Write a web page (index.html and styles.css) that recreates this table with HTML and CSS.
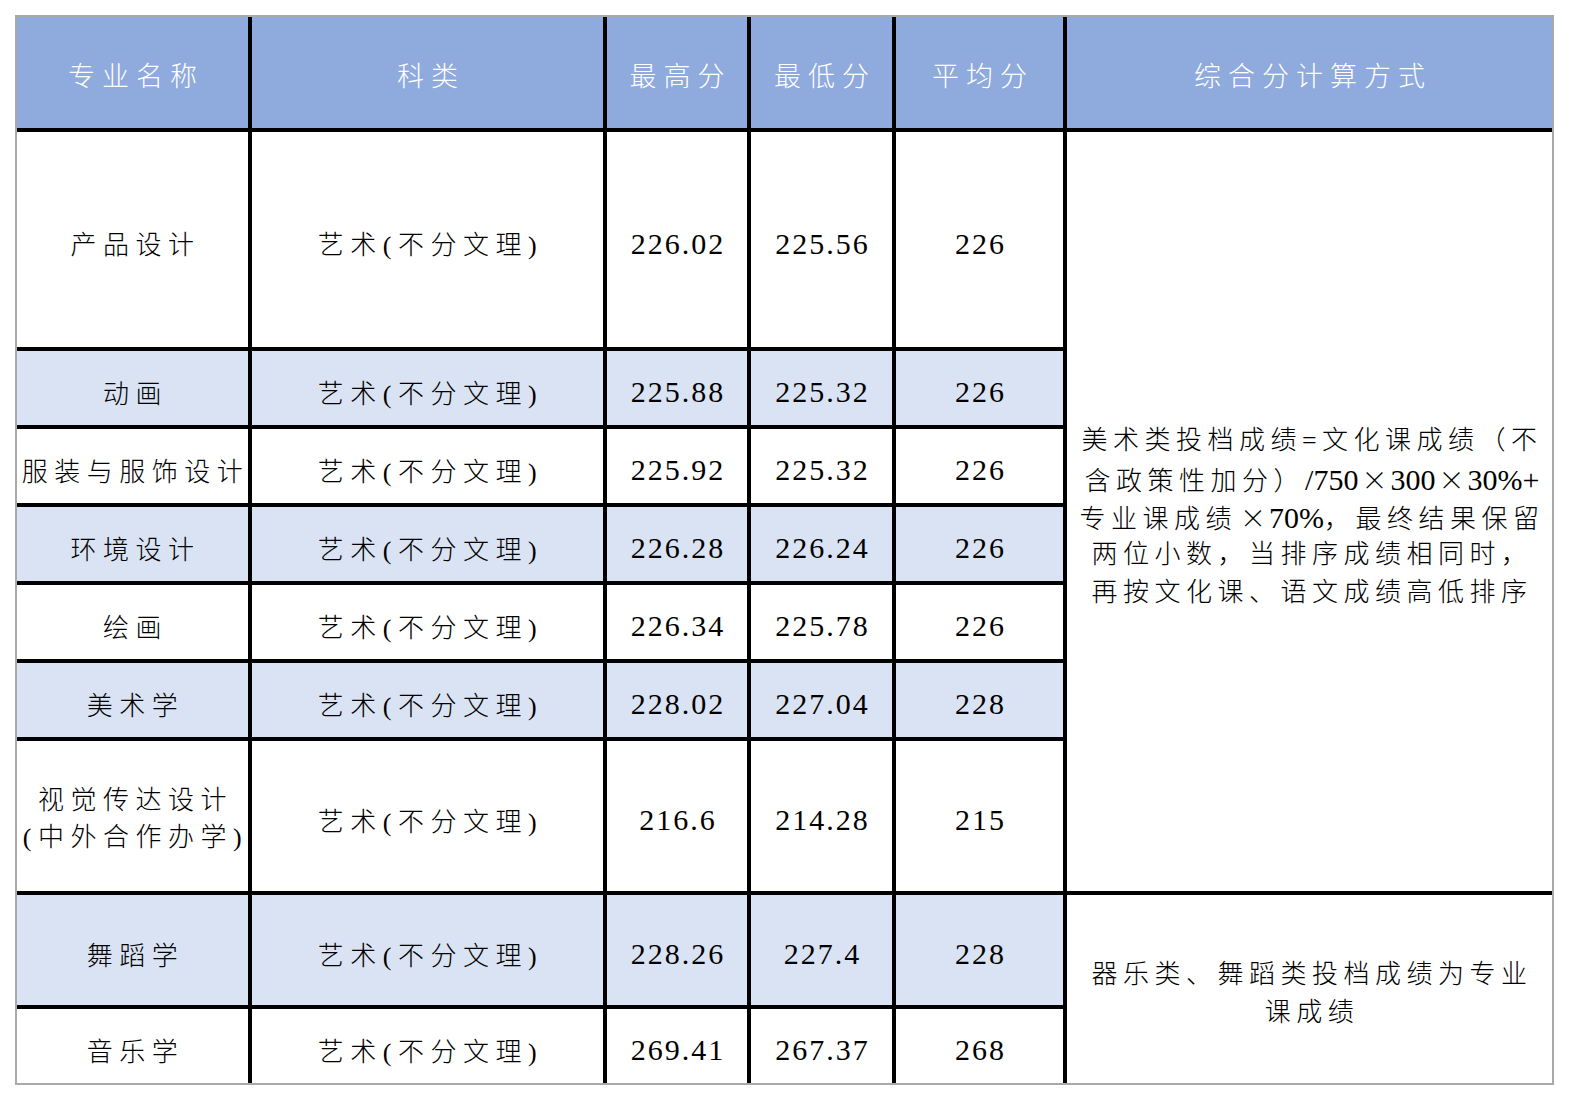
FILE: index.html
```html
<!DOCTYPE html>
<html lang="zh-CN">
<head>
<meta charset="utf-8">
<title>艺术类录取分数</title>
<link rel="stylesheet" href="styles.css">
</head>
<body>
<div class="sheet" role="table">
  <div class="hd" role="columnheader">专业名称</div>
  <div class="hd" role="columnheader">科类</div>
  <div class="hd" role="columnheader">最高分</div>
  <div class="hd" role="columnheader">最低分</div>
  <div class="hd" role="columnheader">平均分</div>
  <div class="hd" role="columnheader">综合分计算方式</div>

  <div class="c">产品设计</div>
  <div class="c">艺术(不分文理)</div>
  <div class="c num">226.02</div>
  <div class="c num">225.56</div>
  <div class="c num">226</div>
  <div class="c note note-art">
    <span class="ln">美术类投档成绩=文化课成绩（不</span>
    <span class="ln">含政策性加分）<span class="lat">/750</span><span class="cjk">×</span><span class="lat">300</span><span class="cjk">×</span><span class="lat">30%+</span></span>
    <span class="ln">专业课成绩<span class="cjk">×</span><span class="lat">70%</span>，最终结果保留</span>
    <span class="ln">两位小数，当排序成绩相同时，</span>
    <span class="ln">再按文化课、语文成绩高低排序</span>
  </div>

  <div class="c alt">动画</div>
  <div class="c alt">艺术(不分文理)</div>
  <div class="c alt num">225.88</div>
  <div class="c alt num">225.32</div>
  <div class="c alt num">226</div>

  <div class="c">服装与服饰设计</div>
  <div class="c">艺术(不分文理)</div>
  <div class="c num">225.92</div>
  <div class="c num">225.32</div>
  <div class="c num">226</div>

  <div class="c alt">环境设计</div>
  <div class="c alt">艺术(不分文理)</div>
  <div class="c alt num">226.28</div>
  <div class="c alt num">226.24</div>
  <div class="c alt num">226</div>

  <div class="c">绘画</div>
  <div class="c">艺术(不分文理)</div>
  <div class="c num">226.34</div>
  <div class="c num">225.78</div>
  <div class="c num">226</div>

  <div class="c alt">美术学</div>
  <div class="c alt">艺术(不分文理)</div>
  <div class="c alt num">228.02</div>
  <div class="c alt num">227.04</div>
  <div class="c alt num">228</div>

  <div class="c two"><span class="ln">视觉传达设计</span><span class="ln">(中外合作办学)</span></div>
  <div class="c">艺术(不分文理)</div>
  <div class="c num">216.6</div>
  <div class="c num">214.28</div>
  <div class="c num">215</div>

  <div class="c alt">舞蹈学</div>
  <div class="c alt">艺术(不分文理)</div>
  <div class="c alt num">228.26</div>
  <div class="c alt num">227.4</div>
  <div class="c alt num">228</div>
  <div class="c note note-music">
    <span class="ln">器乐类、舞蹈类投档成绩为专业</span>
    <span class="ln">课成绩</span>
  </div>

  <div class="c">音乐学</div>
  <div class="c">艺术(不分文理)</div>
  <div class="c num">269.41</div>
  <div class="c num">267.37</div>
  <div class="c num">268</div>
</div>
</body>
</html>
```

FILE: styles.css
```css
html, body {
  margin: 0;
  padding: 0;
  background: #ffffff;
}

body {
  padding: 15px;
  font-family: "Liberation Serif", "Noto Sans CJK SC", serif;
  color: #000000;
}

.sheet {
  display: grid;
  width: 1535px;
  grid-template-columns: 231px 351px 140px 141px 167px 485px;
  grid-template-rows: 111px 215px 74px 74px 74px 74px 74px 150px 110px 74px;
  gap: 4px;
  background: #000000;
  border: 2px solid #a9a9a9;
}

.hd {
  background: #8faadc;
  color: #ffffff;
  font-size: 27px;
  letter-spacing: 7px;
  display: flex;
  align-items: center;
  justify-content: center;
  padding-left: 7px;
  padding-top: 4px;
  font-weight: 300;
}

.c {
  background: #ffffff;
  font-size: 26px;
  letter-spacing: 6.5px;
  display: flex;
  flex-direction: column;
  align-items: center;
  justify-content: center;
  text-align: center;
  white-space: nowrap;
  padding-left: 6px;
  padding-top: 6px;
  font-weight: 300;
}

.c.alt {
  background: #dae3f3;
}

.num {
  font-size: 30px;
  letter-spacing: 2px;
  padding-left: 2px;
  padding-top: 8px;
}

.ln {
  display: block;
  height: 37px;
  line-height: 37px;
}

.cjk {
  font-family: "Noto Sans CJK SC", sans-serif;
  letter-spacing: 0;
  padding: 0 3px;
}

.lat {
  font-size: 30px;
  letter-spacing: 0;
}

.note {
  grid-column: 6;
  background: #ffffff;
  letter-spacing: 5.5px;
  padding-left: 5px;
  padding-top: 10px;
}

.note .ln {
  height: 38px;
  line-height: 38px;
}

.note-art {
  grid-row: 2 / span 7;
}

.note-music {
  grid-row: 9 / span 2;
}
```
